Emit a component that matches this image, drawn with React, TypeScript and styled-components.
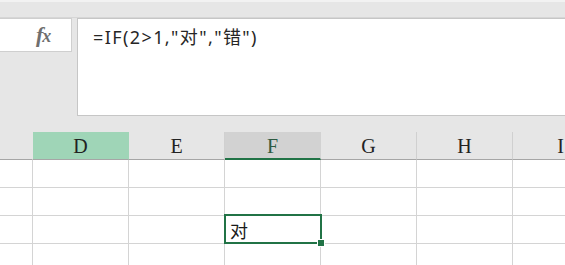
import styled, { createGlobalStyle } from "styled-components";

const GlobalStyle = createGlobalStyle`
  html, body {
    margin: 0;
    padding: 0;
    background: #ffffff;
    overflow: hidden;
  }
`;

const Window = styled.div`
  width: 565px;
  height: 265px;
  overflow: hidden;
  background: #e6e6e6;
  font-family: "Noto Sans", "Noto Sans CJK SC", sans-serif;
`;

const TopStrip = styled.div`
  height: 15px;
  border-top: 2px solid #f2f2f2;
  border-bottom: 1px solid #d6d6d6;
  box-sizing: content-box;
`;

const FormulaBar = styled.div`
  display: flex;
  height: 98px;
`;

const NameArea = styled.div`
  width: 77px;
  flex: none;
`;

const NameBox = styled.div`
  height: 34px;
  width: 72px;
  background: #ffffff;
  border-top: 1px solid #cfcfcf;
  border-right: 1px solid #cfcfcf;
  border-bottom: 1px solid #cfcfcf;
  box-sizing: border-box;
  display: flex;
  align-items: center;
  padding-left: 36px;
`;

const Fx = styled.span`
  font-family: "Liberation Serif", "DejaVu Serif", serif;
  font-style: italic;
  font-weight: bold;
  font-size: 22px;
  color: #6f6f6f;
  letter-spacing: -1px;

  small {
    font-size: 18px;
  }
`;

const FormulaInput = styled.div`
  flex: 1;
  background: #ffffff;
  border: 1px solid #c6c6c6;
  border-right: none;
  padding: 6px 0 0 15px;
  font-size: 18px;
  letter-spacing: 1.4px;
  color: #262626;
  line-height: 24px;
  white-space: nowrap;
`;

const Spacer = styled.div`
  height: 16px;
`;

const Sheet = styled.div`
  display: grid;
  grid-template-columns: 33px repeat(6, 96px);
  grid-auto-rows: 28px;
`;

const HeaderCell = styled.div<{ $state?: "hilite" | "active" }>`
  box-sizing: border-box;
  border-right: 1px solid ${(p) => (p.$state ? "transparent" : "#d0d0d0")};
  border-bottom: ${(p) => (p.$state === "active" ? "2px solid #217346" : "1px solid #a6a6a6")};
  background: ${(p) =>
    p.$state === "hilite" ? "#9fd5b7" : p.$state === "active" ? "#d2d2d2" : "#e6e6e6"};
  color: ${(p) => (p.$state === "active" ? "#2c5a41" : "#222222")};
  font-family: "Liberation Serif", "DejaVu Serif", serif;
  font-size: 20px;
  display: flex;
  align-items: center;
  justify-content: center;
  padding-top: 2px;
`;

const Corner = styled(HeaderCell)`
  border-right-color: transparent;
`;

const Cell = styled.div`
  position: relative;
  box-sizing: border-box;
  background: #ffffff;
  border-right: 1px solid #d4d4d4;
  border-bottom: 1px solid #d4d4d4;
  font-family: "Noto Sans CJK SC", "Noto Sans", sans-serif;
  font-size: 18px;
  color: #1a1a1a;
  display: flex;
  align-items: center;
  padding-left: 5px;
`;

const Selection = styled.div`
  position: absolute;
  z-index: 2;
  left: -1px;
  top: -2px;
  width: 98px;
  height: 30px;
  box-sizing: border-box;
  border: 2px solid #217346;
  pointer-events: none;
`;

const FillHandle = styled.div`
  position: absolute;
  right: -5px;
  bottom: -5px;
  width: 6px;
  height: 6px;
  background: #217346;
  border: 1px solid #ffffff;
`;

const columns = ["D", "E", "F", "G", "H", "I"];
const rowCount = 4;

export default function App() {
  return (
    <Window>
      <GlobalStyle />
      <TopStrip />
      <FormulaBar>
        <NameArea>
          <NameBox>
            <Fx>
              f<small>x</small>
            </Fx>
          </NameBox>
        </NameArea>
        <FormulaInput>=IF(2&gt;1,"对","错")</FormulaInput>
      </FormulaBar>
      <Spacer />
      <Sheet>
        <Corner />
        {columns.map((c) => (
          <HeaderCell
            key={c}
            $state={c === "D" ? "hilite" : c === "F" ? "active" : undefined}
          >
            {c}
          </HeaderCell>
        ))}
        {Array.from({ length: rowCount }).map((_, r) => [
          <Cell key={`a${r}`} />,
          ...columns.map((c) => (
            <Cell key={`${c}${r}`}>
              {r === 2 && c === "F" && (
                <>
                  对
                  <Selection>
                    <FillHandle />
                  </Selection>
                </>
              )}
            </Cell>
          )),
        ])}
      </Sheet>
    </Window>
  );
}
